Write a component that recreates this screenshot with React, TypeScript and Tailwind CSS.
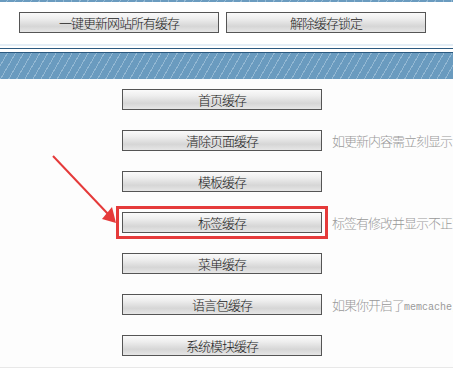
import React from 'react';

const stripe =
  'bg-[repeating-linear-gradient(120deg,#6a9bbf_0px,#6a9bbf_6px,#93b8d3_6px,#93b8d3_7px)]';

const btn =
  'h-[21px] w-[200px] border border-[#555] bg-[linear-gradient(to_bottom,#fafafa_0%,#eeeeee_30%,#d6d6d6_70%,#e6e6e6_100%)] text-[13px] tracking-[-1px] leading-[19px] text-[#222] text-center font-light';

interface Row {
  label: string;
  note?: React.ReactNode;
  marked?: boolean;
}

const rows: Row[] = [
  { label: '首页缓存' },
  { label: '清除页面缓存', note: '如更新内容需立刻显示' },
  { label: '模板缓存' },
  { label: '标签缓存', note: '标签有修改并显示不正常', marked: true },
  { label: '菜单缓存' },
  {
    label: '语言包缓存',
    note: (
      <>
        如果你开启了
        <span className="font-['Liberation_Mono',monospace] text-[10px] tracking-normal">memcache,</span>
      </>
    ),
  },
  { label: '系统模块缓存' },
];

const CacheRow: React.FC<{ row: Row }> = ({ row }) => (
  <div className="flex items-center h-[41px] pl-[122px]">
    <div
      className={`shrink-0 ${
        row.marked ? 'outline-[3px] outline-solid outline-[#e53a3a] outline-offset-[3px]' : ''
      }`}
    >
      <div className={btn}>{row.label}</div>
    </div>
    {row.note && (
      <span className="ml-[10px] whitespace-nowrap text-[13px] tracking-[-1px] font-light text-[#999]">
        {row.note}
      </span>
    )}
  </div>
);

export default function App() {
  return (
    <div
      className="relative w-[453px] h-[369px] overflow-hidden bg-white"
      style={{ fontFamily: '"SimSun", "Noto Sans CJK SC", sans-serif' }}
    >
      <div className={`h-[2px] ${stripe}`} />
      <div className="flex gap-[7px] pl-[19px] pt-[10px] h-[42px]">
        <div className={btn}>一键更新网站所有缓存</div>
        <div className={btn}>解除缓存锁定</div>
      </div>
      <div className="h-[2px] bg-[#e4eef6]" />
      <div className="h-[2px] bg-white" />
      <div className="h-[1px] bg-[#2c5a80]" />
      <div className="h-[3px] bg-white" />
      <div className="h-[1px] bg-[#2c5a80]" />
      <div className={`h-[26px] ${stripe}`} />
      <div className="bg-[#fdfdfd] h-[289px] border-b border-[#e8e8e8]">
        {rows.map((r) => (
          <CacheRow key={r.label} row={r} />
        ))}
      </div>
      <svg className="absolute left-0 top-0" width="453" height="369" viewBox="0 0 453 369">
        <line x1="53" y1="156" x2="108" y2="214" stroke="#e53a3a" strokeWidth="2" />
        <polygon points="116,223 102,219 112,207" fill="#e53a3a" />
      </svg>
    </div>
  );
}
